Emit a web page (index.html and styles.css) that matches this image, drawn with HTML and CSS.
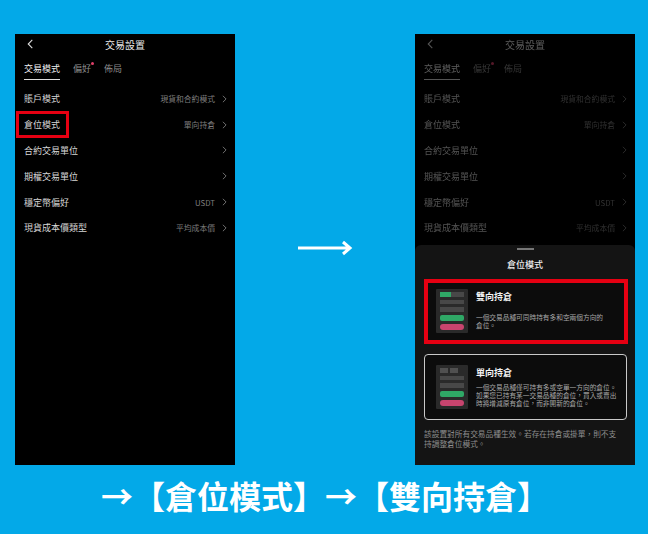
FILE: index.html
```html
<!DOCTYPE html>
<html>
<head>
<title>倉位模式</title>
<link rel="stylesheet" href="styles.css">
</head>
<body>

<div class="stage">

<div class="phone">
<div class="topbar">
<svg class="back" viewBox="0 0 10 12"><path d="M7 1.5 2.5 6 7 10.5"/></svg>
<span>交易設置</span>
</div>
<div class="tabs">
<span class="tab active">交易模式</span>
<span class="tab dot">偏好</span>
<span class="tab">佈局</span>
</div>
<div class="list">
<div class="row"><span>賬戶模式</span><span class="val">現貨和合約模式</span><svg class="chev" viewBox="0 0 6 10"><path d="M1 1l4 4-4 4"/></svg></div>
<div class="row"><span class="mark">倉位模式</span><span class="val">單向持倉</span><svg class="chev" viewBox="0 0 6 10"><path d="M1 1l4 4-4 4"/></svg></div>
<div class="row"><span>合約交易單位</span><span class="val"></span><svg class="chev" viewBox="0 0 6 10"><path d="M1 1l4 4-4 4"/></svg></div>
<div class="row"><span>期權交易單位</span><span class="val"></span><svg class="chev" viewBox="0 0 6 10"><path d="M1 1l4 4-4 4"/></svg></div>
<div class="row"><span>穩定幣偏好</span><span class="val">USDT</span><svg class="chev" viewBox="0 0 6 10"><path d="M1 1l4 4-4 4"/></svg></div>
<div class="row"><span>現貨成本價類型</span><span class="val">平均成本價</span><svg class="chev" viewBox="0 0 6 10"><path d="M1 1l4 4-4 4"/></svg></div>
</div>
</div>

<svg class="bigarrow" viewBox="0 0 56 20"><path d="M1 10h52M46 4l7 6-7 6"/></svg>

<div class="phone dimmed">
<div class="topbar">
<svg class="back" viewBox="0 0 10 12"><path d="M7 1.5 2.5 6 7 10.5"/></svg>
<span>交易設置</span>
</div>
<div class="tabs">
<span class="tab active">交易模式</span>
<span class="tab dot">偏好</span>
<span class="tab">佈局</span>
</div>
<div class="list">
<div class="row"><span>賬戶模式</span><span class="val">現貨和合約模式</span><svg class="chev" viewBox="0 0 6 10"><path d="M1 1l4 4-4 4"/></svg></div>
<div class="row"><span>倉位模式</span><span class="val">單向持倉</span><svg class="chev" viewBox="0 0 6 10"><path d="M1 1l4 4-4 4"/></svg></div>
<div class="row"><span>合約交易單位</span><span class="val"></span><svg class="chev" viewBox="0 0 6 10"><path d="M1 1l4 4-4 4"/></svg></div>
<div class="row"><span>期權交易單位</span><span class="val"></span><svg class="chev" viewBox="0 0 6 10"><path d="M1 1l4 4-4 4"/></svg></div>
<div class="row"><span>穩定幣偏好</span><span class="val">USDT</span><svg class="chev" viewBox="0 0 6 10"><path d="M1 1l4 4-4 4"/></svg></div>
<div class="row"><span>現貨成本價類型</span><span class="val">平均成本價</span><svg class="chev" viewBox="0 0 6 10"><path d="M1 1l4 4-4 4"/></svg></div>
</div>

<div class="shade"></div>

<div class="sheet">
<div class="handle"></div>
<div class="sheettitle">倉位模式</div>

<div class="card picked">
<div class="thumb">
<div class="bar split"><i class="g"></i></div>
<div class="bar"></div>
<div class="bar"></div>
<div class="bar green"></div>
<div class="bar pink"></div>
</div>
<div class="cardtext">
<h4>雙向持倉</h4>
<p class="gap">一個交易品種可同時持有多和空兩個方向的倉位。</p>
</div>
</div>

<div class="card plain">
<div class="thumb">
<div class="bar two"><i></i><i></i></div>
<div class="bar"></div>
<div class="bar"></div>
<div class="bar green"></div>
<div class="bar pink"></div>
</div>
<div class="cardtext">
<h4>單向持倉</h4>
<p>一個交易品種僅可持有多或空單一方向的倉位。如果您已持有某一交易品種的倉位，買入或賣出時將增減原有倉位，而非開新的倉位。</p>
</div>
</div>

<p class="note">該設置對所有交易品種生效。若存在持倉或掛單，則不支持調整倉位模式。</p>
</div>
</div>

</div>

<div class="caption"><span class="arr">→</span>【倉位模式】<span class="arr">→</span>【雙向持倉】</div>

</body>
</html>
```

FILE: styles.css
```css
*{
box-sizing:border-box;
}

html,body{
margin:0;
height:534px;
overflow:hidden;
}

body{
background:#03a9e8;
font-family:"Noto Sans CJK TC","Noto Sans",sans-serif;
color:#e8e8e8;
padding:34px 13px 0 15px;
}

.stage{
display:flex;
justify-content:space-between;
align-items:flex-start;
}

.phone{
position:relative;
width:220px;
height:431px;
background:#000;
overflow:hidden;
}

.dimmed .topbar,
.dimmed .tabs,
.dimmed .list{
filter:blur(.4px);
}

.topbar{
height:20px;
display:flex;
align-items:center;
justify-content:center;
font-size:10px;
position:relative;
}

.back{
position:absolute;
left:11px;
top:4px;
width:9px;
height:12px;
fill:none;
stroke:#ddd;
stroke-width:1.2;
}

.tabs{
display:flex;
gap:13px;
padding:7px 9px 0;
height:27px;
font-size:9px;
line-height:16px;
color:#8c8c8c;
}

.tab{
position:relative;
height:19px;
}

.tab.active{
color:#f0f0f0;
border-bottom:1px solid #ddd;
}

.tab.dot::after{
content:"";
position:absolute;
right:-3px;
top:1px;
width:3px;
height:3px;
border-radius:50%;
background:#e0406a;
}

.list{
padding:5px 9px 0 9px;
}

.row{
height:25.8px;
display:flex;
align-items:center;
font-size:9px;
color:#d6d6d6;
position:relative;
}

.val{
margin-left:auto;
font-size:7.8px;
color:#7d7d7d;
margin-right:7px;
}

.chev{
width:5px;
height:8px;
fill:none;
stroke:#8a8a8a;
stroke-width:1;
margin-right:-1px;
}

.mark{
position:relative;
}

.mark::after{
content:"";
position:absolute;
left:-8px;
right:-9px;
top:-7px;
bottom:-7px;
border:3.5px solid #e60012;
}

.bigarrow{
width:56px;
height:20px;
margin-top:204px;
fill:none;
stroke:#fff;
stroke-width:3;
}

.shade{
position:absolute;
inset:0;
background:rgba(0,0,0,.62);
}

.sheet{
position:absolute;
left:0;
right:0;
top:211px;
bottom:0;
background:#141414;
border-radius:6px 6px 0 0;
padding:3px 9px 0;
}

.handle{
width:17px;
height:2px;
background:#777;
margin:0 auto;
}

.sheettitle{
text-align:center;
font-size:9px;
font-weight:500;
color:#eee;
line-height:14px;
margin-top:8px;
}

.card{
display:flex;
gap:8px;
width:203px;
height:65px;
margin-top:7px;
background:#0c0c0c;
align-items:flex-start;
}

.picked{
border:4px solid #e60012;
padding:6px 8px;
margin-top:7px;
width:204px;
}

.picked p{
max-width:132px;
}

.plain{
border:1px solid #c9c9c9;
border-radius:4px;
margin-top:10px;
padding:10px 8px 10px 11px;
height:66px;
}

.thumb{
flex:none;
width:32px;
height:44px;
background:#2a2a2a;
padding:3px 4px;
display:flex;
flex-direction:column;
gap:3px;
border-radius:1px;
}

.bar{
height:4.5px;
background:#484848;
display:flex;
gap:2px;
flex:none;
}

.bar i{
display:block;
width:8px;
background:#505050;
}

.split .g{
width:11px;
background:#2fa866;
}

.two{
background:none;
}

.green{
height:6px;
background:#2fa866;
border-radius:2px;
}

.pink{
height:6px;
background:#c8446e;
border-radius:3px;
}

.cardtext{
min-width:0;
padding-top:2px;
}

.cardtext h4{
margin:0;
font-size:9px;
line-height:12px;
font-weight:700;
color:#f2f2f2;
}

.cardtext p{
margin:4px 0 0;
font-size:6.7px;
line-height:8px;
color:#a8a8a8;
}

.cardtext p.gap{
margin-top:10px;
}

.note{
margin:9px 0 0;
padding-right:6px;
font-size:7.7px;
line-height:10px;
color:#8e8e8e;
}

.caption{
margin-top:7px;
text-align:center;
font-size:32px;
line-height:46px;
font-weight:700;
color:#fff;
white-space:nowrap;
}
```
